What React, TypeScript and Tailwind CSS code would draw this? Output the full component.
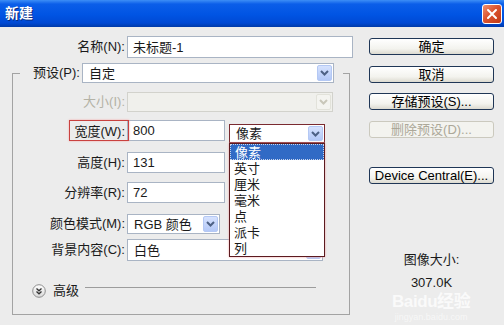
import React from "react";

const UNITS = ["像素", "英寸", "厘米", "毫米", "点", "派卡", "列"];

function Chevron({ color }: { color: string }) {
  return (
    <svg width="9" height="6" viewBox="0 0 9 6">
      <path d="M1 1l3.5 3.5L8 1" fill="none" stroke={color} strokeWidth="2" />
    </svg>
  );
}

function ArrowBox({ disabled }: { disabled?: boolean }) {
  return (
    <div
      className={`w-[15px] m-[1px] rounded-[2px] border flex items-center justify-center ${
        disabled
          ? "bg-[#f4f4f0] border-[#e2e2da]"
          : "bg-[linear-gradient(#d6e2fe,#b3c8f7)] border-[#b4c8f4]"
      }`}
    >
      <Chevron color={disabled ? "#c9c7ba" : "#4d6185"} />
    </div>
  );
}

function Combo({
  value,
  size,
  disabled,
  border = "border-[#a9b4c4]",
}: {
  value?: string;
  size: string;
  disabled?: boolean;
  border?: string;
}) {
  return (
    <div
      className={`${size} flex items-stretch border ${
        disabled ? "border-[#d2d2cc] bg-[#f0f0ec]" : `${border} bg-white`
      }`}
    >
      <span className="flex-1 px-[6px] flex items-center leading-none">{value}</span>
      <ArrowBox disabled={disabled} />
    </div>
  );
}

function Field({ value, size }: { value: string; size: string }) {
  return (
    <div className={`${size} border border-[#a9b4c4] bg-white px-[5px] flex items-center leading-none`}>
      {value}
    </div>
  );
}

function Row({
  label,
  className = "",
  disabled,
  marked,
  children,
}: {
  label: string;
  className?: string;
  disabled?: boolean;
  marked?: boolean;
  children: React.ReactNode;
}) {
  return (
    <div className={`flex items-center ${className}`}>
      <div className={`relative w-[112px] text-right ${disabled ? "text-[#b4b2a6]" : ""}`}>
        {label}
        {marked && (
          <div className="absolute -top-[2px] left-[56px] w-[60px] h-[21px] border border-[#c9413f] shadow-[0_0_2px_#f5a5a5]" />
        )}
      </div>
      <div className="ml-[2px] flex items-start">{children}</div>
    </div>
  );
}

function Btn({ children, disabled, className = "" }: { children: React.ReactNode; disabled?: boolean; className?: string }) {
  return (
    <div
      className={`h-[17px] w-[125px] rounded-[3px] border flex items-center justify-center leading-none ${className} ${
        disabled
          ? "border-[#cbc9be] text-[#aca899] bg-[#f3f3ef]"
          : "border-[#1f3656] text-black bg-[linear-gradient(#ffffff,#f3f3ee_65%,#dcdad0)]"
      }`}
    >
      {children}
    </div>
  );
}

export default function App() {
  return (
    <div className="relative w-[504px] h-[325px] overflow-hidden bg-[#ececec] text-[13px] text-[#1a1a1a] font-[family-name:'Liberation_Sans','Noto_Sans_CJK_SC',sans-serif] flex flex-col">
      {/* title bar */}
      <div className="h-[27px] shrink-0 flex items-center justify-between pl-[5px] pr-[2px] bg-[linear-gradient(to_bottom,#3d8ef6_0%,#0b5ee9_15%,#0054e3_55%,#0049d4_85%,#003aa8_100%)]">
        <span className="text-white font-bold text-[14px] [text-shadow:1px_1px_0_#0a2a7e]">新建</span>
        <div className="w-[20px] h-[20px] rounded-[3px] border border-white bg-[linear-gradient(135deg,#f09070,#dc5430_45%,#c13a16)] flex items-center justify-center">
          <svg width="12" height="12" viewBox="0 0 12 12">
            <path d="M2 2l8 8M10 2l-8 8" stroke="white" strokeWidth="2" strokeLinecap="round" />
          </svg>
        </div>
      </div>

      <div className="flex flex-1">
        {/* form */}
        <div className="w-[369px] flex flex-col">
          <div className="flex items-center mt-[9px]">
            <div className="w-[125px] text-right">名称(N):</div>
            <Field value="未标题-1" size="ml-[2px] w-[226px] h-[22px]" />
          </div>

          <fieldset className="mt-[5px] ml-[12px] w-[338px] min-w-0 border border-[#a3a3a3] pb-[16px]">
            <legend className="ml-[7px] pl-[13px] pr-[9px]">
              <div className="flex items-center h-[20px]">
                <span>预设(P):</span>
                <div className="ml-[2px]">
                  <Combo value="自定" size="w-[252px] h-[20px]" />
                </div>
              </div>
            </legend>

            <Row label="大小(I):" disabled className="mt-[9px]">
              <Combo disabled size="w-[206px] h-[20px]" />
            </Row>

            <Row label="宽度(W):" marked className="mt-[8px] relative z-10">
              <Field value="800" size="w-[98px] h-[21px]" />
              <div className="relative ml-[4px] mt-[4px]">
                <Combo value="像素" size="w-[96px] h-[19px]" border="border-[#7a2a30]" />
                <div className="absolute top-full left-0 w-[96px] bg-white border border-[#5c1a1f] shadow-[0_0_2px_#f2a0a0]">
                  {UNITS.map((u, i) => (
                    <div
                      key={u}
                      className={`h-[16px] pl-[4px] flex items-center leading-none ${
                        i === 0 ? "bg-[#316ac5] text-white border border-dotted border-[#c8d4ec]" : ""
                      }`}
                    >
                      {u}
                    </div>
                  ))}
                </div>
              </div>
            </Row>

            <Row label="高度(H):" className="mt-[9px]">
              <Field value="131" size="w-[98px] h-[21px]" />
            </Row>

            <Row label="分辨率(R):" className="mt-[9px]">
              <Field value="72" size="w-[98px] h-[21px]" />
            </Row>

            <Row label="颜色模式(M):" className="mt-[11px]">
              <Combo value="RGB 颜色" size="w-[93px] h-[20px]" />
            </Row>

            <Row label="背景内容(C):" className="mt-[5px]">
              <Combo value="白色" size="w-[196px] h-[22px]" />
            </Row>

            <div className="flex items-center mt-[23px] h-[14px]">
              <svg className="ml-[19px]" width="14" height="14" viewBox="0 0 14 14">
                <defs>
                  <linearGradient id="adv" x1="0" y1="0" x2="0" y2="1">
                    <stop offset="0" stopColor="#ffffff" />
                    <stop offset="1" stopColor="#d8d8d8" />
                  </linearGradient>
                </defs>
                <circle cx="7" cy="7" r="6.3" fill="url(#adv)" stroke="#8e8e8e" />
                <path d="M4.5 4.5L7 6.8l2.5-2.3M4.5 7.5L7 9.8l2.5-2.3" fill="none" stroke="#333" strokeWidth="1.3" />
              </svg>
              <span className="ml-[7px]">高级</span>
              <div className="flex-1 self-start mt-[3px] ml-[6px] mr-[33px] border-t border-[#9c9c9c]" />
            </div>
          </fieldset>
        </div>

        {/* buttons */}
        <div className="w-[125px] flex flex-col items-center">
          <Btn className="mt-[11px]">确定</Btn>
          <Btn className="mt-[11px]">取消</Btn>
          <Btn className="mt-[10px]">存储预设(S)...</Btn>
          <Btn disabled className="mt-[11px]">删除预设(D)...</Btn>
          <Btn className="mt-[29px]">Device Central(E)...</Btn>
          <div className="mt-[68px] leading-[16px]">图像大小:</div>
          <div className="mt-[7px] leading-[16px]">307.0K</div>
        </div>
      </div>

      {/* watermark */}
      <div className="absolute left-[392px] top-[293px] flex flex-col items-center text-white/75 pointer-events-none">
        <div className="text-[17px] font-bold leading-none tracking-tight">Baidu经验</div>
        <div className="text-[9px] leading-none mt-[3px] text-white/60">jingyan.baidu.com</div>
      </div>
    </div>
  );
}
